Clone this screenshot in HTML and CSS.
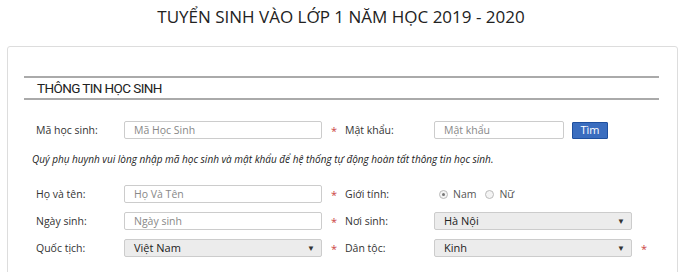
FILE: index.html
```html
<!DOCTYPE html>
<html lang="vi">
<head>
<meta charset="utf-8">
<title>Tuyển sinh</title>
<link rel="stylesheet" href="styles.css">
</head>
<body>
<h1 class="title">TUYỂN SINH VÀO LỚP 1 NĂM HỌC 2019 - 2020</h1>
<div class="card">
  <div class="section-head">THÔNG TIN HỌC SINH</div>
  <div class="form">
    <div class="row">
      <label class="lbl">Mã học sinh:</label>
      <div class="input ph">Mã Học Sinh</div>
      <span class="star">*</span>
      <label class="lbl">Mật khẩu:</label>
      <div class="pw-group">
        <div class="input ph pw">Mật khẩu</div>
        <button class="btn">Tìm</button>
      </div>
      <span></span>
    </div>
    <p class="note">Quý phụ huynh vui lòng nhập mã học sinh và mật khẩu để hệ thống tự động hoàn tất thông tin học sinh.</p>
    <div class="row">
      <label class="lbl">Họ và tên:</label>
      <div class="input ph">Họ Và Tên</div>
      <span class="star">*</span>
      <label class="lbl">Giới tính:</label>
      <div class="radios">
        <span class="radio checked"></span><span class="rtext">Nam</span>
        <span class="radio"></span><span class="rtext">Nữ</span>
      </div>
      <span></span>
    </div>
    <div class="row">
      <label class="lbl">Ngày sinh:</label>
      <div class="input ph">Ngày sinh</div>
      <span class="star">*</span>
      <label class="lbl">Nơi sinh:</label>
      <div class="select">Hà Nội<span class="arrow">▼</span></div>
      <span></span>
    </div>
    <div class="row">
      <label class="lbl">Quốc tịch:</label>
      <div class="select">Việt Nam<span class="arrow">▼</span></div>
      <span class="star">*</span>
      <label class="lbl">Dân tộc:</label>
      <div class="select">Kinh<span class="arrow">▼</span></div>
      <span class="star">*</span>
    </div>
  </div>
</div>
</body>
</html>
```
FILE: styles.css
```css
html, body {
  margin: 0;
  padding: 0;
  background: #fff;
  font-family: "Open Sans", "Liberation Sans", sans-serif;
  color: #333;
}
.title {
  margin: 0;
  padding-top: 5px;
  height: 40px;
  box-sizing: border-box;
  text-align: center;
  font-weight: 400;
  font-size: 17px;
  line-height: 24px;
  color: #222;
}
.card {
  margin: 6px 4px 0 7px;
  border: 1px solid #ddd;
  border-radius: 3px;
  padding: 29px 18px 20px 16px;
  height: 260px;
}
.section-head {
  border-top: 2px solid #aaa;
  border-bottom: 2px solid #aaa;
  padding-left: 13px;
  height: 20px;
  line-height: 20px;
  font-family: Roboto, "Liberation Sans", sans-serif;
  font-size: 13.5px;
  letter-spacing: -0.6px;
  color: #222;
}
.form {
  padding-left: 12px;
  padding-top: 21px;
}
.row {
  display: grid;
  grid-template-columns: 88px 198px 23px 89px 198px 12px;
  align-items: center;
  height: 18px;
  margin-bottom: 9px;
  font-size: 10.5px;
}
.lbl {
  color: #333;
}
.input {
  height: 18px;
  box-sizing: border-box;
  border: 1px solid #ccc;
  border-radius: 2px;
  padding-left: 9px;
  line-height: 16px;
  background: #fff;
}
.ph {
  color: #888;
}
.star {
  color: #c44;
  padding-left: 9px;
  font-size: 11px;
}
.pw-group {
  display: flex;
  gap: 8px;
  align-items: center;
}
.pw {
  width: 130px;
}
.btn {
  width: 36px;
  height: 17px;
  padding: 0;
  border: 1px solid #1e4f9e;
  background: #3a6dbf;
  color: #fff;
  font-family: "Open Sans", "Liberation Sans", sans-serif;
  font-size: 11px;
  line-height: 14px;
  border-radius: 1px;
}
.note {
  margin: 13px 0 19px -4px;
  font-style: italic;
  font-size: 10px;
  color: #222;
  line-height: 14px;
}
.radios {
  display: flex;
  align-items: center;
  padding-left: 5px;
}
.radio {
  width: 7px;
  height: 7px;
  border: 1px solid #bbb;
  border-radius: 50%;
  background: #f4f4f4;
  position: relative;
  margin-right: 5px;
}
.radio.checked::after {
  content: "";
  position: absolute;
  left: 2px;
  top: 2px;
  width: 3px;
  height: 3px;
  border-radius: 50%;
  background: #777;
}
.rtext {
  color: #555;
  margin-right: 9px;
}
.select {
  height: 18px;
  box-sizing: border-box;
  border: 1px solid #ccc;
  border-radius: 2px;
  background: #ececec;
  padding-left: 9px;
  line-height: 16px;
  font-size: 11px;
  color: #222;
  display: flex;
  justify-content: space-between;
}
.arrow {
  font-size: 8px;
  color: #333;
  padding-right: 6px;
}
```
